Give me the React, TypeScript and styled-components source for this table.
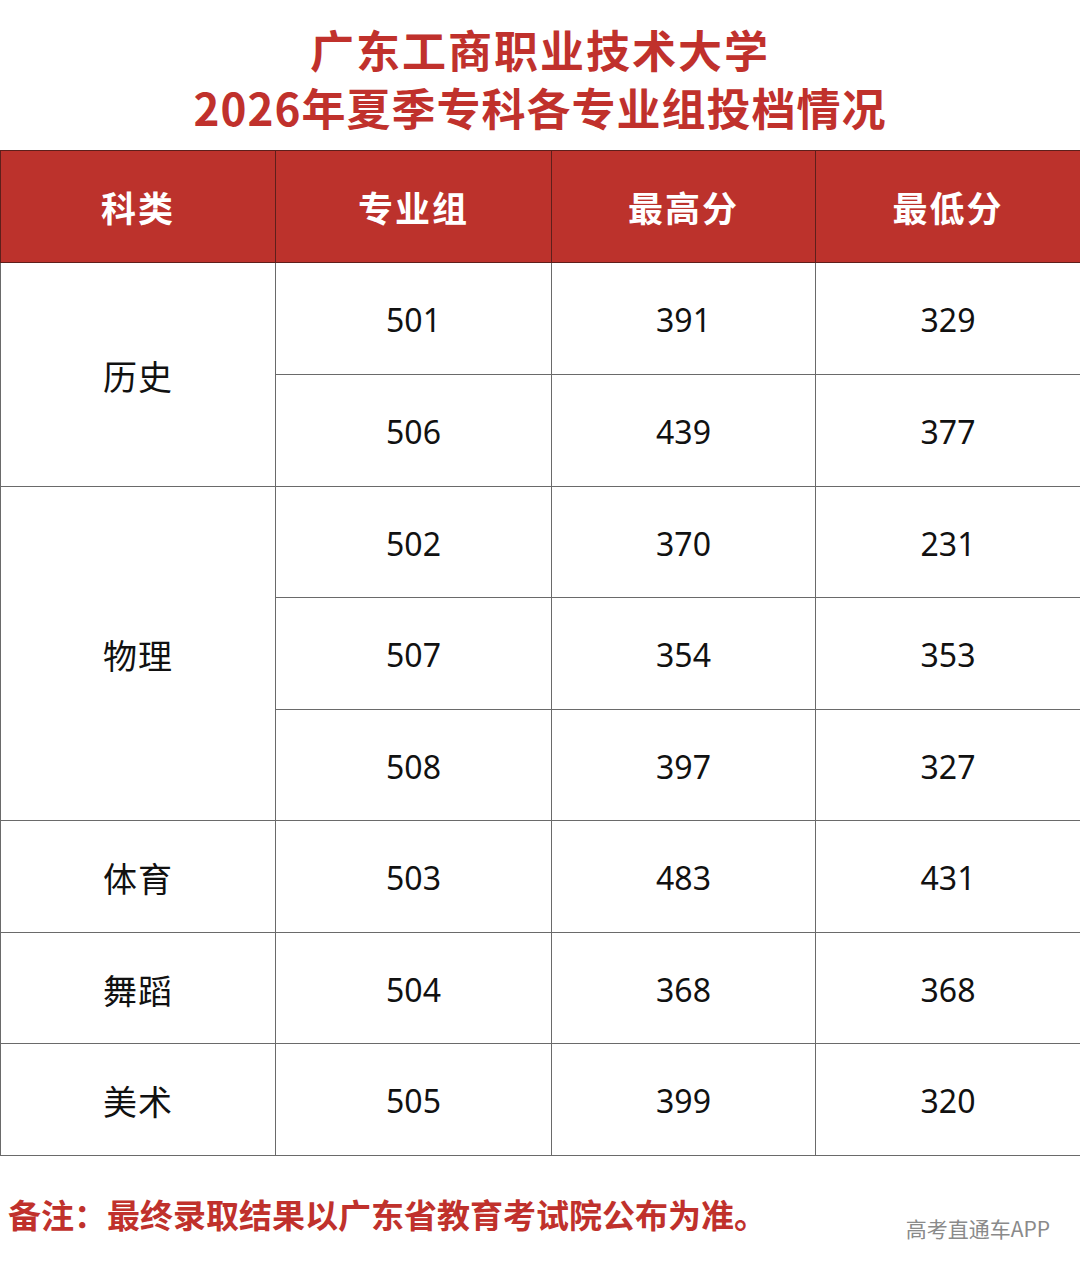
import React from "react";
import styled, { createGlobalStyle } from "styled-components";

const Global = createGlobalStyle`
  html, body { margin: 0; padding: 0; background: #ffffff; }
  body { font-family: "Noto Sans CJK SC", "Noto Sans", sans-serif; }
`;

const Page = styled.div`
  width: 1080px;
  height: 1267px;
  background: #ffffff;
  display: flex;
  flex-direction: column;
  overflow: hidden;
`;

const TitleBlock = styled.div`
  padding-top: 20px;
  display: flex;
  flex-direction: column;
  align-items: center;
  color: #c0312c;
  font-weight: 700;
  font-size: 44px;
  line-height: 58px;
`;

const TitleLine = styled.div<{ $spacing: number }>`
  letter-spacing: ${(p) => p.$spacing}px;
  white-space: nowrap;
`;

const Table = styled.table`
  margin-top: 14px;
  width: 1080px;
  border-collapse: collapse;
  table-layout: fixed;
`;

const HeadCell = styled.th`
  height: 111px;
  background: #bc322c;
  color: #ffffff;
  font-size: 35px;
  font-weight: 700;
  letter-spacing: 2px;
  text-align: center;
  border: 1px solid #5e1f1b;
  padding: 0;
`;

const Row = styled.tr<{ $h: number }>`
  height: ${(p) => p.$h}px;
`;

const Cell = styled.td<{ $kind: "label" | "num" }>`
  text-align: center;
  vertical-align: middle;
  border: 1px solid #6a6a6a;
  padding: 0;
  color: #111111;
  font-size: ${(p) => (p.$kind === "label" ? "34px" : "32px")};
  font-family: ${(p) =>
    p.$kind === "label"
      ? '"Noto Sans CJK SC", sans-serif'
      : '"Noto Sans", "Noto Sans CJK SC", sans-serif'};
  letter-spacing: ${(p) => (p.$kind === "label" ? "1px" : "0px")};
  padding-top: 2px;
`;

const Footer = styled.div`
  flex: 1;
  display: flex;
  justify-content: space-between;
  align-items: flex-start;
  padding: 37px 30px 0 8px;
`;

const Note = styled.div`
  color: #c0312c;
  font-size: 33px;
  font-weight: 700;
  line-height: 42px;
  white-space: nowrap;
`;

const Watermark = styled.div`
  color: #8a8a8a;
  font-size: 21px;
  line-height: 28px;
  padding-top: 21px;
  white-space: nowrap;
`;

type Group = { label: string; rows: [string, string, string][] };

const groups: Group[] = [
  { label: "历史", rows: [["501", "391", "329"], ["506", "439", "377"]] },
  {
    label: "物理",
    rows: [
      ["502", "370", "231"],
      ["507", "354", "353"],
      ["508", "397", "327"],
    ],
  },
  { label: "体育", rows: [["503", "483", "431"]] },
  { label: "舞蹈", rows: [["504", "368", "368"]] },
  { label: "美术", rows: [["505", "399", "320"]] },
];

const heights = [112, 112, 111, 112, 111, 112, 111, 112];

export default function App() {
  let idx = 0;
  return (
    <Page>
      <Global />
      <TitleBlock>
        <TitleLine $spacing={2}>广东工商职业技术大学</TitleLine>
        <TitleLine $spacing={1}>2026年夏季专科各专业组投档情况</TitleLine>
      </TitleBlock>
      <Table>
        <colgroup>
          <col style={{ width: 275 }} />
          <col style={{ width: 276 }} />
          <col style={{ width: 264 }} />
          <col style={{ width: 265 }} />
        </colgroup>
        <thead>
          <tr>
            <HeadCell>科类</HeadCell>
            <HeadCell>专业组</HeadCell>
            <HeadCell>最高分</HeadCell>
            <HeadCell>最低分</HeadCell>
          </tr>
        </thead>
        <tbody>
          {groups.map((g) =>
            g.rows.map((r, i) => {
              const h = heights[idx++];
              return (
                <Row key={r[0]} $h={h}>
                  {i === 0 && (
                    <Cell $kind="label" rowSpan={g.rows.length}>
                      {g.label}
                    </Cell>
                  )}
                  <Cell $kind="num">{r[0]}</Cell>
                  <Cell $kind="num">{r[1]}</Cell>
                  <Cell $kind="num">{r[2]}</Cell>
                </Row>
              );
            })
          )}
        </tbody>
      </Table>
      <Footer>
        <Note>备注：最终录取结果以广东省教育考试院公布为准。</Note>
        <Watermark>高考直通车APP</Watermark>
      </Footer>
    </Page>
  );
}
